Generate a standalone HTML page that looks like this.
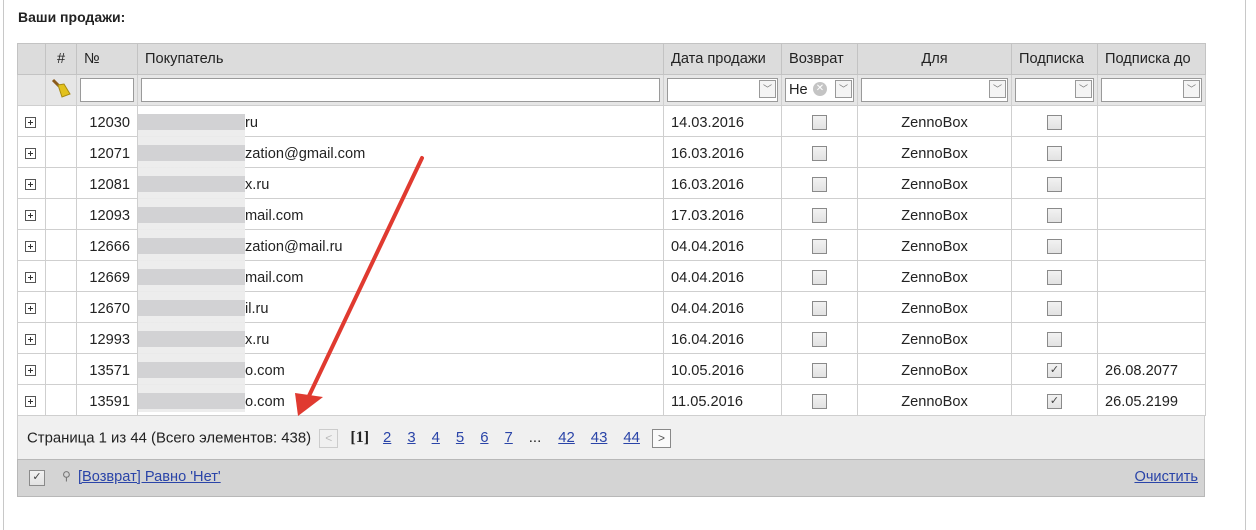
<!DOCTYPE html>
<html><head><meta charset="utf-8"><style>
body{margin:0;width:1256px;height:530px;background:#fff;font-family:"Liberation Sans","DejaVu Sans",sans-serif;font-size:14.6px;color:#222;position:relative;overflow:hidden}
.vl{position:absolute;top:0;bottom:0;width:1px;background:#c8c8c8}
h{position:absolute;left:18px;top:9px;font-weight:bold;font-size:14px;color:#222}
table{position:absolute;left:17px;top:43px;border-collapse:collapse;table-layout:fixed;width:1188px}
td{border:1px solid #cfcfcf;height:30px;padding:0 7px;white-space:nowrap;overflow:hidden}
tr.d td{padding-top:3px;height:27px;line-height:16px}
tr.hd td{background:#dcdcdc;border-color:#c3c3c3}
tr.fl td{background:#e6e6e6;border-color:#cfcfcf;padding:0 3px}
.inp{height:22px;border:1px solid #9a9a9a;background:#fff;position:relative}
.dd{position:absolute;right:1px;top:1px;width:17px;height:18px;border:1px solid #999;background:#f4f4f4;box-sizing:border-box;font-size:9px;color:#777;text-align:center;line-height:16px}
.pl{display:inline-block;width:9px;height:9px;border:1px solid #555;position:relative;vertical-align:-1px}
.pl:before{content:"";position:absolute;left:2px;top:4px;width:5px;height:1px;background:#333}
.pl:after{content:"";position:absolute;left:4px;top:2px;width:1px;height:5px;background:#333}
.cb{display:inline-block;width:15px;height:15px;border:1px solid #8a8a8a;background:linear-gradient(#f2f2f2,#e2e2e2);vertical-align:-3px;box-sizing:border-box;font-size:11px;line-height:13px;color:#444;text-align:center;overflow:hidden}
.c{text-align:center}
.r{text-align:right}
.pg{position:absolute;left:17px;top:416px;width:1186px;height:43px;background:#f0f0f0;border:1px solid #cfcfcf;border-top:none}
.ft{position:absolute;left:17px;top:459px;width:1186px;height:36px;background:#d4d4d4;border:1px solid #b8b8b8}
a{color:#2a44a8;text-decoration:underline}
.pg a{margin-right:16px}
.blur{position:absolute;left:138px;top:114px;width:107px;height:298px;background:repeating-linear-gradient(#d0d0d2 0 16px,#ececec 16px 31px);opacity:.95}
</style></head><body>
<div class="vl" style="left:3px"></div><div class="vl" style="left:1245px"></div>
<h>Ваши продажи:</h>
<table>
<colgroup><col style="width:28px"><col style="width:31px"><col style="width:61px"><col style="width:526px"><col style="width:118px"><col style="width:76px"><col style="width:154px"><col style="width:86px"><col style="width:108px"></colgroup>
<tr class="hd"><td></td><td class="c">#</td><td>№</td><td>Покупатель</td><td>Дата продажи</td><td>Возврат</td><td class="c">Для</td><td>Подписка</td><td>Подписка до</td></tr>
<tr class="fl"><td></td><td class="c"><svg width="22" height="22" viewBox="0 0 22 22"><path d="M3 3 L9 9" stroke="#8a5a1a" stroke-width="3"/><path d="M8 8 L14 7 L20 17 L12 20 Z" fill="#e2c11c" stroke="#a88a10"/></svg></td><td><div class="inp"></div></td><td><div class="inp"></div></td><td><div class="inp"><div class="dd">﹀</div></div></td><td><div class="inp" style="line-height:22px;padding-left:3px">Не<span style="position:absolute;left:27px;top:3px;width:14px;height:14px;border-radius:50%;background:#c4c4c4;color:#fff;font-size:10px;line-height:14px;text-align:center">✕</span><div class="dd">﹀</div></div></td><td><div class="inp"><div class="dd">﹀</div></div></td><td><div class="inp"><div class="dd">﹀</div></div></td><td><div class="inp"><div class="dd">﹀</div></div></td></tr>
<tr class="d"><td><span class="pl"></span></td><td></td><td class="r">12030</td><td style="padding-left:107px">ru</td><td>14.03.2016</td><td class="c"><span class="cb"></span></td><td class="c">ZennoBox</td><td class="c"><span class="cb"></span></td><td></td></tr>
<tr class="d"><td><span class="pl"></span></td><td></td><td class="r">12071</td><td style="padding-left:107px">zation@gmail.com</td><td>16.03.2016</td><td class="c"><span class="cb"></span></td><td class="c">ZennoBox</td><td class="c"><span class="cb"></span></td><td></td></tr>
<tr class="d"><td><span class="pl"></span></td><td></td><td class="r">12081</td><td style="padding-left:107px">x.ru</td><td>16.03.2016</td><td class="c"><span class="cb"></span></td><td class="c">ZennoBox</td><td class="c"><span class="cb"></span></td><td></td></tr>
<tr class="d"><td><span class="pl"></span></td><td></td><td class="r">12093</td><td style="padding-left:107px">mail.com</td><td>17.03.2016</td><td class="c"><span class="cb"></span></td><td class="c">ZennoBox</td><td class="c"><span class="cb"></span></td><td></td></tr>
<tr class="d"><td><span class="pl"></span></td><td></td><td class="r">12666</td><td style="padding-left:107px">zation@mail.ru</td><td>04.04.2016</td><td class="c"><span class="cb"></span></td><td class="c">ZennoBox</td><td class="c"><span class="cb"></span></td><td></td></tr>
<tr class="d"><td><span class="pl"></span></td><td></td><td class="r">12669</td><td style="padding-left:107px">mail.com</td><td>04.04.2016</td><td class="c"><span class="cb"></span></td><td class="c">ZennoBox</td><td class="c"><span class="cb"></span></td><td></td></tr>
<tr class="d"><td><span class="pl"></span></td><td></td><td class="r">12670</td><td style="padding-left:107px">il.ru</td><td>04.04.2016</td><td class="c"><span class="cb"></span></td><td class="c">ZennoBox</td><td class="c"><span class="cb"></span></td><td></td></tr>
<tr class="d"><td><span class="pl"></span></td><td></td><td class="r">12993</td><td style="padding-left:107px">x.ru</td><td>16.04.2016</td><td class="c"><span class="cb"></span></td><td class="c">ZennoBox</td><td class="c"><span class="cb"></span></td><td></td></tr>
<tr class="d"><td><span class="pl"></span></td><td></td><td class="r">13571</td><td style="padding-left:107px">o.com</td><td>10.05.2016</td><td class="c"><span class="cb"></span></td><td class="c">ZennoBox</td><td class="c"><span class="cb">✓</span></td><td>26.08.2077</td></tr>
<tr class="d"><td><span class="pl"></span></td><td></td><td class="r">13591</td><td style="padding-left:107px">o.com</td><td>11.05.2016</td><td class="c"><span class="cb"></span></td><td class="c">ZennoBox</td><td class="c"><span class="cb">✓</span></td><td>26.05.2199</td></tr>
</table>
<div class="blur"></div>
<div class="pg"><div style="position:absolute;left:9px;top:13px;white-space:nowrap;font-size:14.9px">Страница 1 из 44 (Всего элементов: 438) <span style="display:inline-block;width:17px;height:17px;border:1px solid #ccc;color:#bbb;text-align:center;line-height:16px;font-size:12px;vertical-align:middle;margin:0 8px 0 4px">&lt;</span> <b style="font-family:'Liberation Serif',serif;font-size:16px;margin-right:14px">[1]</b><a>2</a><a>3</a><a>4</a><a>5</a><a>6</a><a>7</a><span style="margin-right:17px">...</span><a>42</a><a>43</a><a style="margin-right:12px">44</a><span style="display:inline-block;width:17px;height:17px;border:1px solid #888;color:#555;text-align:center;line-height:16px;font-size:12px;vertical-align:middle;background:#fafafa">&gt;</span></div></div>
<div class="ft"><span class="cb" style="position:absolute;left:11px;top:10px;width:16px;height:16px">✓</span><span style="position:absolute;left:44px;top:9px;color:#777;font-size:12px">⚲</span><a style="position:absolute;left:60px;top:9px">[Возврат] Равно 'Нет'</a><a style="position:absolute;right:6px;top:9px">Очистить</a></div>
<svg style="position:absolute;left:0;top:0" width="1256" height="530"><line x1="422" y1="158" x2="308" y2="398" stroke="#e03a30" stroke-width="4" stroke-linecap="round"/><polygon points="298,416 295,393 323,397" fill="#e03a30"/></svg>
</body></html>
